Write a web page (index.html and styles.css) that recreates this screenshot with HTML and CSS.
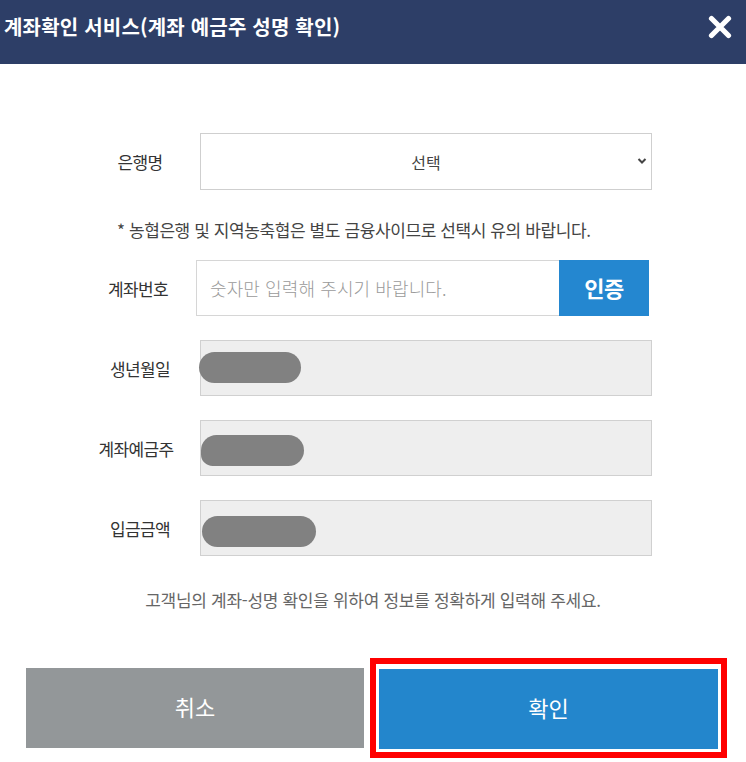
FILE: index.html
```html
<!DOCTYPE html>
<html lang="ko">
<head>
<meta charset="utf-8">
<title>계좌확인 서비스</title>
<link rel="stylesheet" href="styles.css">
</head>
<body>
<header class="hd">
  <h1 class="hd-title">계좌확인 서비스(계좌 예금주 성명 확인)</h1>
  <button class="hd-close" aria-label="닫기">
    <svg width="24" height="24" viewBox="0 0 24 24"><path d="M3.5 3.5 L20.5 20.5 M20.5 3.5 L3.5 20.5" stroke="#fff" stroke-width="5.2" stroke-linecap="round" fill="none"/></svg>
  </button>
</header>
<main class="body">
  <div class="row">
    <label class="lbl">은행명</label>
    <div class="sel-wrap">
      <div class="sel">선택</div>
      <svg class="chev" width="10" height="8" viewBox="0 0 10 8"><path d="M1.5 2 L5 5.5 L8.5 2" stroke="#444" stroke-width="2" fill="none"/></svg>
    </div>
  </div>
  <p class="note">* 농협은행 및 지역농축협은 별도 금융사이므로 선택시 유의 바랍니다.</p>
  <div class="row">
    <label class="lbl lbl-acc">계좌번호</label>
    <div class="acc">
      <div class="acc-input">숫자만 입력해 주시기 바랍니다.</div>
      <button class="acc-btn">인증</button>
    </div>
  </div>
  <div class="row row-gap">
    <label class="lbl">생년월일</label>
    <div class="field"><span class="blob b1"></span></div>
  </div>
  <div class="row row-gap">
    <label class="lbl lbl-wide">계좌예금주</label>
    <div class="field"><span class="blob b2"></span></div>
  </div>
  <div class="row row-gap">
    <label class="lbl">입금금액</label>
    <div class="field"><span class="blob b3"></span></div>
  </div>
  <p class="info">고객님의 계좌-성명 확인을 위하여 정보를 정확하게 입력해 주세요.</p>
  <div class="btns">
    <button class="btn btn-cancel">취소</button>
    <div class="focus-ring"><button class="btn btn-ok">확인</button></div>
  </div>
</main>
</body>
</html>
```
FILE: styles.css
```css
* { box-sizing: border-box; }
html, body { margin: 0; padding: 0; background: #fff; }
body {
  font-family: "Noto Sans CJK KR", "Noto Sans", sans-serif;
  color: #333;
  width: 746px;
  height: 762px;
  overflow: hidden;
}
.hd {
  height: 64px;
  background: #2d3e67;
  display: flex;
  justify-content: space-between;
  align-items: flex-start;
  padding: 12px 14px 0 4px;
}
.hd-title {
  margin: 0;
  color: #fff;
  font-size: 20px;
  font-weight: 700;
  letter-spacing: 0.2px;
  line-height: 30px;
}
.hd-close {
  background: none;
  border: 0;
  padding: 3px 0 0 0;
  margin: 0;
  line-height: 0;
}
.body { padding: 69px 0 0 0; }
.row { display: flex; align-items: center; }
.row-gap { margin-top: 24px; }
.lbl {
  width: 120px;
  margin-left: 80px;
  text-align: center;
  font-size: 17px;
  color: #333;
  letter-spacing: -0.6px;
  flex: none;
}
.lbl-wide { letter-spacing: -0.6px; padding-right: 8px; }
.lbl-acc { width: 116px; padding-right: 0; }
.sel-wrap { position: relative; width: 452px; }
.sel {
  height: 57px;
  border: 1px solid #cfcfcf;
  background: #fff;
  display: flex;
  align-items: center;
  justify-content: center;
  font-size: 16px;
  color: #444;
}
.chev { position: absolute; right: 5px; top: 24px; }
.note {
  margin: 27px 0 17px 117px;
  font-size: 17px;
  line-height: 26px;
  color: #444;
  letter-spacing: -0.4px;
}
.acc { display: flex; width: 453px; height: 56px; }
.acc-input {
  flex: 1;
  border: 1px solid #d6d6d6;
  border-right: 0;
  display: flex;
  align-items: center;
  padding-left: 13px;
  font-size: 18px;
  color: #9a9a9a;
  font-weight: 300;
  letter-spacing: 0.1px;
}
.acc-btn {
  width: 90px;
  border: 0;
  background: #2487d0;
  color: #fff;
  font-family: inherit;
  font-size: 22px;
  font-weight: 700;
  letter-spacing: -0.5px;
  padding: 0 0 2px 0;
}
.field {
  width: 452px;
  height: 56px;
  background: #eeeeee;
  border: 1px solid #d0d0d0;
  display: flex;
  align-items: center;
}
.blob {
  display: block;
  height: 31px;
  border-radius: 16px;
  background: #818181;
}
.b1 { width: 102px; margin-left: -2px; margin-top: -2px; }
.b2 { width: 103px; margin-left: 0; margin-top: 4px; border-bottom-left-radius: 12px; }
.b3 { width: 114px; margin-left: 1px; margin-top: 6px; }
.info {
  margin: 32px 0 0 0;
  text-align: center;
  font-size: 17px;
  line-height: 24px;
  color: #666;
  letter-spacing: -0.3px;
}
.btns {
  display: flex;
  align-items: center;
  margin-top: 46px;
  padding-left: 26px;
}
.btn {
  border: 0;
  height: 80px;
  color: #fff;
  font-family: inherit;
  font-size: 22px;
  font-weight: 400;
  display: block;
  padding: 0 0 4px 0;
}
.btn-cancel { width: 338px; background: #939799; }
.focus-ring {
  margin-left: 6px;
  border: 6px solid #ff0000;
  padding: 5px 3px 3px 3px;
}
.btn-ok { width: 339px; background: #2386cc; }
```
